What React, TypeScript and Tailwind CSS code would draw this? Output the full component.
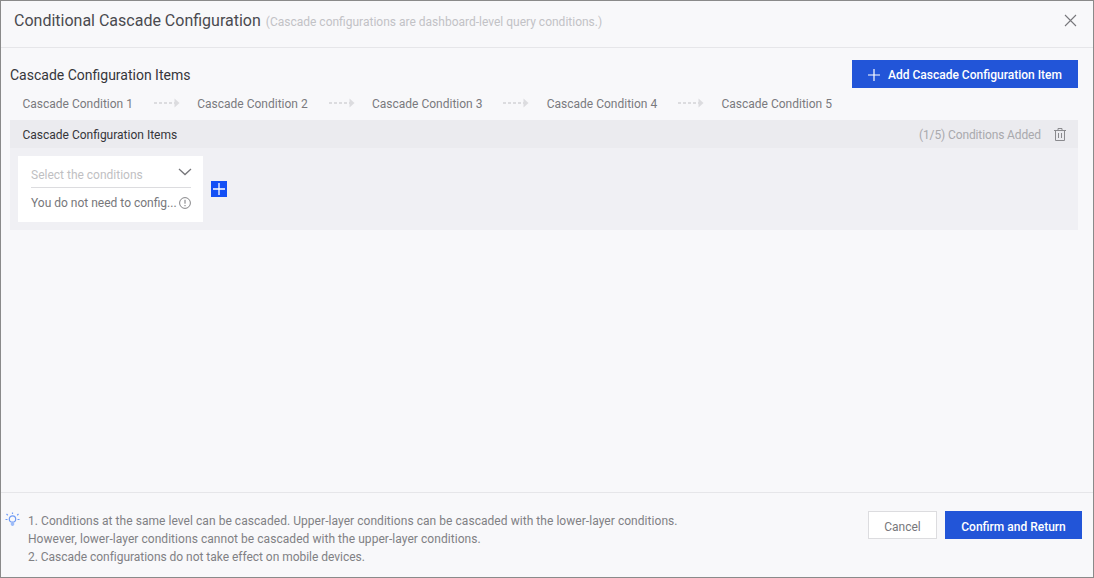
import React from "react";

const Arrow = () => (
  <svg width="26" height="10" viewBox="0 0 26 10" className="shrink-0">
    <path d="M0 5h3M5 5h3M10 5h3M15 5h3M20 5h1" stroke="#d2d2d6" strokeWidth="1.3" fill="none" />
    <path d="M20.5 0.5v9l5-4.5z" fill="#dcdcdf" />
  </svg>
);

const steps = [
  "Cascade Condition 1",
  "Cascade Condition 2",
  "Cascade Condition 3",
  "Cascade Condition 4",
  "Cascade Condition 5",
];

export default function App() {
  return (
    <div className="w-[1094px] h-[578px] flex flex-col bg-[#f8f8fa] border border-[#8a8a8a] font-['Roboto',sans-serif] overflow-hidden">
      <div className="h-[47px] shrink-0 flex items-center justify-between border-b border-[#e6e6e9] pl-[13px] pr-[16px] pb-[7px]">
        <div className="flex items-baseline">
          <span className="text-[16px] text-[#4a4a4f]">Conditional Cascade Configuration</span>
          <span className="text-[12px] text-[#c2c2c6] ml-[5px]">(Cascade configurations are dashboard-level query conditions.)</span>
        </div>
        <svg width="13" height="13" viewBox="0 0 13 13">
          <path d="M1 1l11 11M12 1L1 12" stroke="#77777b" strokeWidth="1.1" fill="none" />
        </svg>
      </div>

      <div className="flex-1 min-h-0 flex flex-col pl-[9px] pr-[15px] pt-[12px]">
        <div className="flex items-center justify-between h-[28px]">
          <span className="text-[14px] text-[#36363a] pt-[2px]">Cascade Configuration Items</span>
          <button className="h-[28px] w-[226px] bg-[#2255d8] text-white text-[12px] font-medium flex items-center justify-center gap-[8px] pt-[2px]">
            <svg width="12" height="12" viewBox="0 0 12 12">
              <path d="M6 0v12M0 6h12" stroke="#fff" strokeWidth="1.2" />
            </svg>
            Add Cascade Configuration Item
          </button>
        </div>

        <div className="flex items-center h-[32px] pl-[12.5px] pb-[1px]">
          {steps.map((s, i) => (
            <React.Fragment key={s}>
              <span className="text-[12px] text-[#7a7a7e] whitespace-nowrap">{s}</span>
              {i < 4 && (
                <span className="w-[64.3px] flex justify-start pl-[21px] mb-[1px]">
                  <Arrow />
                </span>
              )}
            </React.Fragment>
          ))}
        </div>

        <div className="bg-[#f0f0f4] h-[110px] flex flex-col">
          <div className="h-[28px] shrink-0 bg-[#ebebef] flex items-center justify-between pl-[12.5px] pr-[12px]">
            <span className="text-[12px] text-[#36363a] pt-[2px]">Cascade Configuration Items</span>
            <div className="flex items-center gap-[13px]">
              <span className="text-[12px] text-[#a9a9ad] tracking-[-0.12px] pt-[2px]">(1/5) Conditions Added</span>
              <svg width="12" height="13" viewBox="0 0 12 13" fill="none" stroke="#8a8a8e" strokeWidth="1">
                <path d="M0 2.5h12M4 2.5V.5h4v2M1.5 2.5v10h9v-10M4.5 5v5M7.5 5v5" />
              </svg>
            </div>
          </div>
          <div className="flex items-center pl-[8px] pt-[8px]">
            <div className="w-[185px] h-[66px] bg-white pl-[13px] pr-[12px] flex flex-col">
              <div className="h-[32px] shrink-0 flex items-center justify-between border-b border-[#dcdcdf]">
                <span className="text-[12px] text-[#bfbfc3] pt-[7px]">Select the conditions</span>
                <svg width="14" height="8" viewBox="0 0 14 8" className="mr-[-1px]">
                  <path d="M1 1l6 5.5L13 1" stroke="#77777b" strokeWidth="1.3" fill="none" />
                </svg>
              </div>
              <div className="flex items-center justify-between h-[29px]">
                <span className="text-[12px] text-[#77777b] whitespace-nowrap">You do not need to config...</span>
                <svg width="12" height="12" viewBox="0 0 12 12" fill="none" className="shrink-0">
                  <circle cx="6" cy="6" r="5.4" stroke="#77777b" strokeWidth="0.9" />
                  <path d="M6 2.8v3.9M6 8v1.2" stroke="#77777b" strokeWidth="1" />
                </svg>
              </div>
            </div>
            <button className="w-[16px] h-[16px] bg-[#1450f5] ml-[8px] flex items-center justify-center">
              <svg width="12" height="12" viewBox="0 0 12 12">
                <path d="M6 0v12M0 6h12" stroke="#fff" strokeWidth="1.3" />
              </svg>
            </button>
          </div>
        </div>
      </div>

      <div className="h-[85px] shrink-0 border-t border-[#e6e6e9] flex items-start justify-between pl-[4px] pr-[11px]">
        <div className="flex items-start pt-[19px]">
          <svg width="15" height="16" viewBox="0 0 15 16" fill="none" stroke="#6f9bf5" strokeWidth="1.2" className="shrink-0">
            <circle cx="7.5" cy="7" r="3.2" />
            <path d="M7.5 0.5v1.6M1.5 2l1.3 1.2M13.5 2l-1.3 1.2M0.5 7.5h2M12.5 7.5h2" />
            <path d="M5.8 11h3.4v1.5l-1 1.5h-1.4l-1-1.5z" fill="#9dbcf8" stroke="none" />
          </svg>
          <div className="ml-[8px] text-[12px] leading-[18px] text-[#808084] whitespace-nowrap">
            <p className="tracking-[0.05px]">1. Conditions at the same level can be cascaded. Upper-layer conditions can be cascaded with the lower-layer conditions.</p>
            <p className="tracking-[0.05px]">However, lower-layer conditions cannot be cascaded with the upper-layer conditions.</p>
            <p className="tracking-[-0.03px]">2. Cascade configurations do not take effect on mobile devices.</p>
          </div>
        </div>
        <div className="flex items-center gap-[8px] pt-[18px]">
          <button className="w-[69px] h-[28px] bg-white border border-[#dcdcdf] text-[12px] text-[#77777b] pt-[3px]">Cancel</button>
          <button className="w-[137px] h-[28px] bg-[#2255d8] text-white text-[12px] font-medium pt-[4px]">Confirm and Return</button>
        </div>
      </div>
    </div>
  );
}
